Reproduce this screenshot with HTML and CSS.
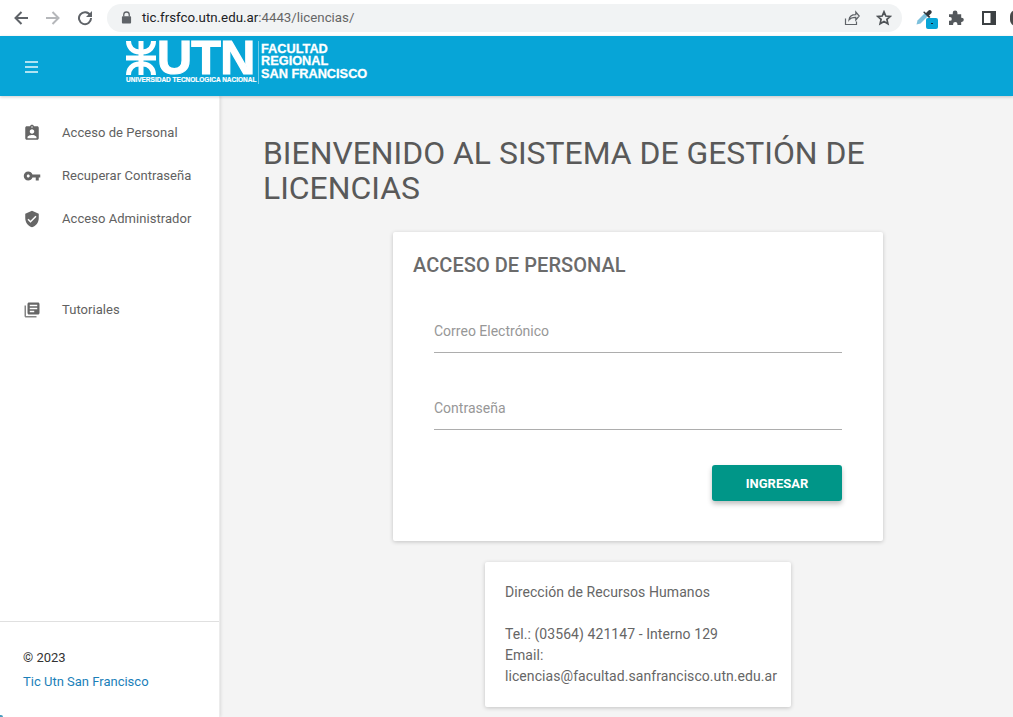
FILE: index.html
```html
<!DOCTYPE html>
<html lang="es">
<head>
<meta charset="utf-8">
<title>Licencias</title>
<link rel="stylesheet" href="styles.css">
</head>
<body>
<div class="chrome">
  <div class="nav-buttons">
    <svg class="nav-icon" viewBox="0 0 16 16"><path d="M15 8H2.500M8.500 2 2.500 8l6 6" fill="none" stroke="#5f6368" stroke-width="2"/></svg>
    <svg class="nav-icon" viewBox="0 0 16 16"><path d="M1 8h12.500M7.500 2l6 6-6 6" fill="none" stroke="#b5b7ba" stroke-width="2"/></svg>
    <svg class="nav-icon" viewBox="0 0 16 16"><path d="M13.200 5.200A6 6 0 1 0 14 8" fill="none" stroke="#5f6368" stroke-width="2"/><path d="M15 1v6H9z" fill="#5f6368"/></svg>
  </div>
  <div class="omnibox">
    <svg class="lock" viewBox="0 0 12 14"><path d="M3 6V4a3 3 0 0 1 6 0v2" fill="none" stroke="#5f6368" stroke-width="1.400"/><rect x="1" y="5.500" width="10" height="8" rx="1" fill="#5f6368"/></svg>
    <span class="url"><span class="url-host">tic.frsfco.utn.edu.ar</span>:4443/licencias/</span>
    <span class="omni-spacer"></span>
    <svg class="omni-icon" viewBox="0 0 16 16"><path d="M1.500 8.500v6h11v-3M5 10c.3-3.400 3-5.300 6.800-5.300V2l3.400 4-3.400 4V7.400C8.800 7.300 6.500 8 5 10z" fill="none" stroke="#5f6368" stroke-width="1.200"/></svg>
    <svg class="omni-icon star" viewBox="0 0 16 16"><path d="M8 1.800 9.800 6l4.500.4-3.400 3 1 4.400L8 11.500l-3.900 2.300 1-4.400-3.400-3L6.200 6z" fill="none" stroke="#4f5357" stroke-width="1.700"/></svg>
  </div>
  <div class="extensions">
    <span class="ext-dropper">
      <svg class="dropper" viewBox="0 0 18 18"><path d="M.5 17.500 1.500 13.500 9 6l3 3-7.500 7.500z" fill="#7cc0dc"/><path d="M8.500 4.500 10 6l2.500-2.500a2 2 0 0 1 3 2.500L13 8.500l1.500 1.500-1.500 1-6-6z" fill="#33383c"/></svg>
      <span class="ext-badge"><span class="ext-dot"></span></span>
    </span>
    <svg class="ext-icon" viewBox="0 0 16 16"><path d="M0 4.500h4V3a2.500 2.500 0 0 1 5 0v1.500h4v3.700h.5a2.300 2.300 0 0 1 0 4.600H13V16H9v-1a2.300 2.300 0 0 0-4.600 0v1H0v-4.500h1a2 2 0 0 0 0-4H0z" fill="#54585c"/></svg>
    <svg class="ext-icon panel" viewBox="0 0 14 14"><path d="M1 1h12v12H1z" fill="none" stroke="#3c4043" stroke-width="2"/><rect x="8.500" y="1" width="4.500" height="12" fill="#3c4043"/></svg>
    <span class="avatar"></span>
  </div>
</div>
<header class="topbar">
  <svg class="menu-icon" viewBox="0 0 13 12"><path d="M0 1h13M0 6h13M0 11h13" stroke="#e8f7fc" stroke-width="1.400"/></svg>
  <div class="logo">
    <div class="logo-left">
      <div class="logo-main">
        <svg class="logo-mark" viewBox="0 0 30 34"><g fill="none" stroke="#fff" stroke-width="5"><path d="M2.500 0c0 6 4 11 11 11M27.500 0c0 6-4 11-11 11M2.500 34c0-6 4-11 11-11M27.500 34c0-6-4-11-11-11"/></g><path d="M12.500 0h5v34h-5zM0 14.500h30v5H0z" fill="#fff"/></svg>
        <span class="logo-utn">UTN</span>
      </div>
      <span class="logo-sub">UNIVERSIDAD TECNOLOGICA NACIONAL</span>
    </div>
    <div class="logo-right">FACULTAD<br>REGIONAL<br>SAN FRANCISCO</div>
  </div>
</header>
<div class="layout">
  <aside class="sidebar">
    <nav class="nav-group">
      <a class="nav-item"><svg class="item-icon" viewBox="0 0 24 24"><path d="M19 3h-4.180C14.400 1.840 13.300 1 12 1s-2.400.84-2.820 2H5c-1.100 0-2 .9-2 2v14c0 1.100.9 2 2 2h14c1.100 0 2-.9 2-2V5c0-1.100-.9-2-2-2zm-7 0c.55 0 1 .45 1 1s-.45 1-1 1-1-.45-1-1 .45-1 1-1zm0 4c1.660 0 3 1.340 3 3s-1.340 3-3 3-3-1.340-3-3 1.340-3 3-3zm6 12H6v-1.400c0-2 4-3.100 6-3.100s6 1.100 6 3.100V19z"/></svg>Acceso de Personal</a>
      <a class="nav-item"><svg class="item-icon" viewBox="0 0 24 24"><path d="M12.650 10C11.830 7.670 9.610 6 7 6c-3.310 0-6 2.690-6 6s2.690 6 6 6c2.610 0 4.830-1.670 5.650-4H17v4h4v-4h2v-4H12.650zM7 14c-1.100 0-2-.9-2-2s.9-2 2-2 2 .9 2 2-.9 2-2 2z"/></svg>Recuperar Contraseña</a>
      <a class="nav-item"><svg class="item-icon" viewBox="0 0 24 24"><path d="M12 1 3 5v6c0 5.550 3.840 10.740 9 12 5.160-1.260 9-6.450 9-12V5l-9-4zm-2 16-4-4 1.410-1.410L10 14.170l6.590-6.590L18 9l-8 8z"/></svg>Acceso Administrador</a>
    </nav>
    <nav class="nav-group nav-second">
      <a class="nav-item"><svg class="item-icon" viewBox="0 0 24 24"><path d="M4 6H2v14c0 1.100.9 2 2 2h14v-2H4V6z" opacity=".8"/><path d="M20 2H8c-1.100 0-2 .9-2 2v12c0 1.100.9 2 2 2h12c1.100 0 2-.9 2-2V4c0-1.100-.9-2-2-2zm-1 9H9V9h10v2zm-4 4H9v-2h6v2zm4-8H9V5h10v2z"/></svg>Tutoriales</a>
    </nav>
    <footer class="side-footer">
      <div class="copy">© 2023</div>
      <a class="side-link">Tic Utn San Francisco</a>
    </footer>
    <span class="corner-mark"></span>
  </aside>
  <main class="content">
    <h1 class="title">BIENVENIDO AL SISTEMA DE GESTIÓN DE LICENCIAS</h1>
    <section class="card login">
      <h2 class="card-title">ACCESO DE PERSONAL</h2>
      <div class="field">Correo Electrónico</div>
      <div class="field">Contraseña</div>
      <div class="actions"><button class="btn">INGRESAR</button></div>
    </section>
    <section class="card info">
      <p>Dirección de Recursos Humanos</p>
      <p class="info-gap">Tel.: (03564) 421147 - Interno 129</p>
      <p>Email:</p>
      <p>licencias@facultad.sanfrancisco.utn.edu.ar</p>
    </section>
  </main>
</div>
</body>
</html>
```
FILE: styles.css
```css
* { box-sizing: border-box; }
html, body { margin: 0; height: 717px; overflow: hidden; }
body { font-family: Roboto, sans-serif; background: #f4f4f4; display: flex; flex-direction: column; }

.chrome { height: 36px; background: #fff; display: flex; align-items: center; flex: none; }
.nav-buttons { display: flex; gap: 16px; padding-left: 13px; width: 107px; flex: none; margin-top: -1px; }
.nav-icon { width: 16px; height: 16px; }
.omnibox { width: 795px; height: 28px; margin-top: -1px; background: #f1f3f4; border-radius: 14px; display: flex; align-items: center; padding-left: 14px; font-size: 13.300px; color: #666; flex: none; }
.lock { width: 11px; height: 13px; margin-right: 10px; }
.url-host { color: #202124; }
.omni-spacer { flex: 1; }
.omni-icon { width: 16px; height: 16px; margin-right: 16px; }
.omni-icon.star { margin-right: 10px; }
.extensions { display: flex; align-items: center; padding-left: 14px; flex: none; }
.ext-dropper { width: 22px; height: 24px; position: relative; display: block; margin-right: 11px; margin-top: 2px; }
.dropper { width: 18px; height: 18px; display: block; }
.ext-badge { position: absolute; left: 10px; top: 11px; width: 12px; height: 11px; background: #07a4d6; border-radius: 2px; display: flex; align-items: center; justify-content: center; }
.ext-dot { width: 2px; height: 1px; background: #123; }
.ext-icon { width: 15px; height: 15px; margin-top: -2px; }
.panel { width: 14px; height: 14px; margin-left: 18px; margin-top: -1px; }
.avatar { width: 12px; height: 16px; margin-left: 14px; margin-top: -1px; border-radius: 8px; background: #4a4a4a; }

.topbar { height: 60px; background: #07a5d7; display: flex; align-items: center; flex: none; position: relative; z-index: 3; box-shadow: 0 1px 3px rgba(0,0,0,.2); }
.menu-icon { width: 13px; height: 12px; margin-left: 25px; margin-top: 2px; flex: none; }
.logo { margin-left: 88px; display: flex; color: #fff; margin-top: -8px; }
.logo-left { width: 132px; display: flex; flex-direction: column; }
.logo-main { display: flex; align-items: flex-start; height: 35px; }
.logo-mark { width: 30px; height: 34px; flex: none; }
.logo-utn { font-family: "Liberation Sans", sans-serif; font-weight: 700; font-size: 48.500px; line-height: 35px; letter-spacing: -.7px; margin-left: 1px; margin-top: -1px; -webkit-text-stroke: 1.200px #fff; }
.logo-sub { font-family: "Liberation Sans", sans-serif; font-weight: 700; font-size: 6.500px; line-height: 8px; white-space: nowrap; -webkit-text-stroke: .2px #fff; }
.logo-right { padding: 2px 0 0 2px; border-left: 1px solid #6fcbe7; font-family: "Liberation Sans", sans-serif; font-weight: 700; font-size: 12.750px; line-height: 12.500px; white-space: nowrap; -webkit-text-stroke: .3px #fff; }

.layout { display: flex; flex: 1; min-height: 0; }
.sidebar { width: 220px; flex: none; background: #fff; border-right: 1px solid #ececec; box-shadow: 1px 0 3px rgba(0,0,0,.1); display: flex; flex-direction: column; position: relative; z-index: 2; }
.corner-mark { position: absolute; left: 0; bottom: 0; width: 3px; height: 2px; background: #4a9cc0; border-top-right-radius: 3px; }
.nav-group { padding-top: 15px; display: flex; flex-direction: column; }
.nav-item { height: 43px; display: flex; align-items: center; padding-left: 23px; font-size: 13px; color: #616161; letter-spacing: .05px; }
.item-icon { width: 18px; height: 18px; fill: #666; margin-right: 21px; flex: none; }
.nav-second { padding-top: 48px; flex: 1; }
.side-footer { border-top: 1px solid #e0e0e0; height: 96px; padding: 28px 0 0 23px; font-size: 13px; }
.copy { color: #333; line-height: 16px; }
.side-link { display: block; color: #1a80b9; margin-top: 8px; line-height: 16px; }

.content { flex: 1; min-width: 0; padding: 40px 0 0 43px; display: flex; flex-direction: column; align-items: center; }
.title { align-self: stretch; margin: 0; font-weight: 400; font-size: 31.900px; line-height: 35px; color: #595959; }
.card { background: #fff; border-radius: 2px; box-shadow: 0 1px 4px rgba(0,0,0,.2); }
.login { width: 490px; height: 309px; margin-top: 26px; padding: 22px 41px 0 20px; display: flex; flex-direction: column; flex: none; }
.card-title { margin: 0; font-size: 20px; line-height: 23px; font-weight: 500; color: #6b6b6b; letter-spacing: .05px; }
.field { margin-left: 21px; height: 45px; border-bottom: 1px solid #adadad; font-size: 14px; color: #979797; line-height: 20px; padding-top: 13px; margin-bottom: 32px; }
.card-title + .field { margin-top: 31px; }
.actions { display: flex; justify-content: flex-end; margin-top: 3px; }
.btn { width: 130px; height: 36px; border: 0; border-radius: 3px; background: #009688; color: #fff; font-family: Roboto, sans-serif; font-size: 13px; font-weight: 700; box-shadow: 0 3px 5px rgba(0,0,0,.25); }
.info { width: 306px; height: 145px; margin-top: 21px; padding: 20px 0 0 20px; flex: none; font-size: 14px; color: #666; line-height: 21px; letter-spacing: .07px; }
.info p { margin: 0; white-space: nowrap; }
.info .info-gap { margin-top: 21px; }
```
